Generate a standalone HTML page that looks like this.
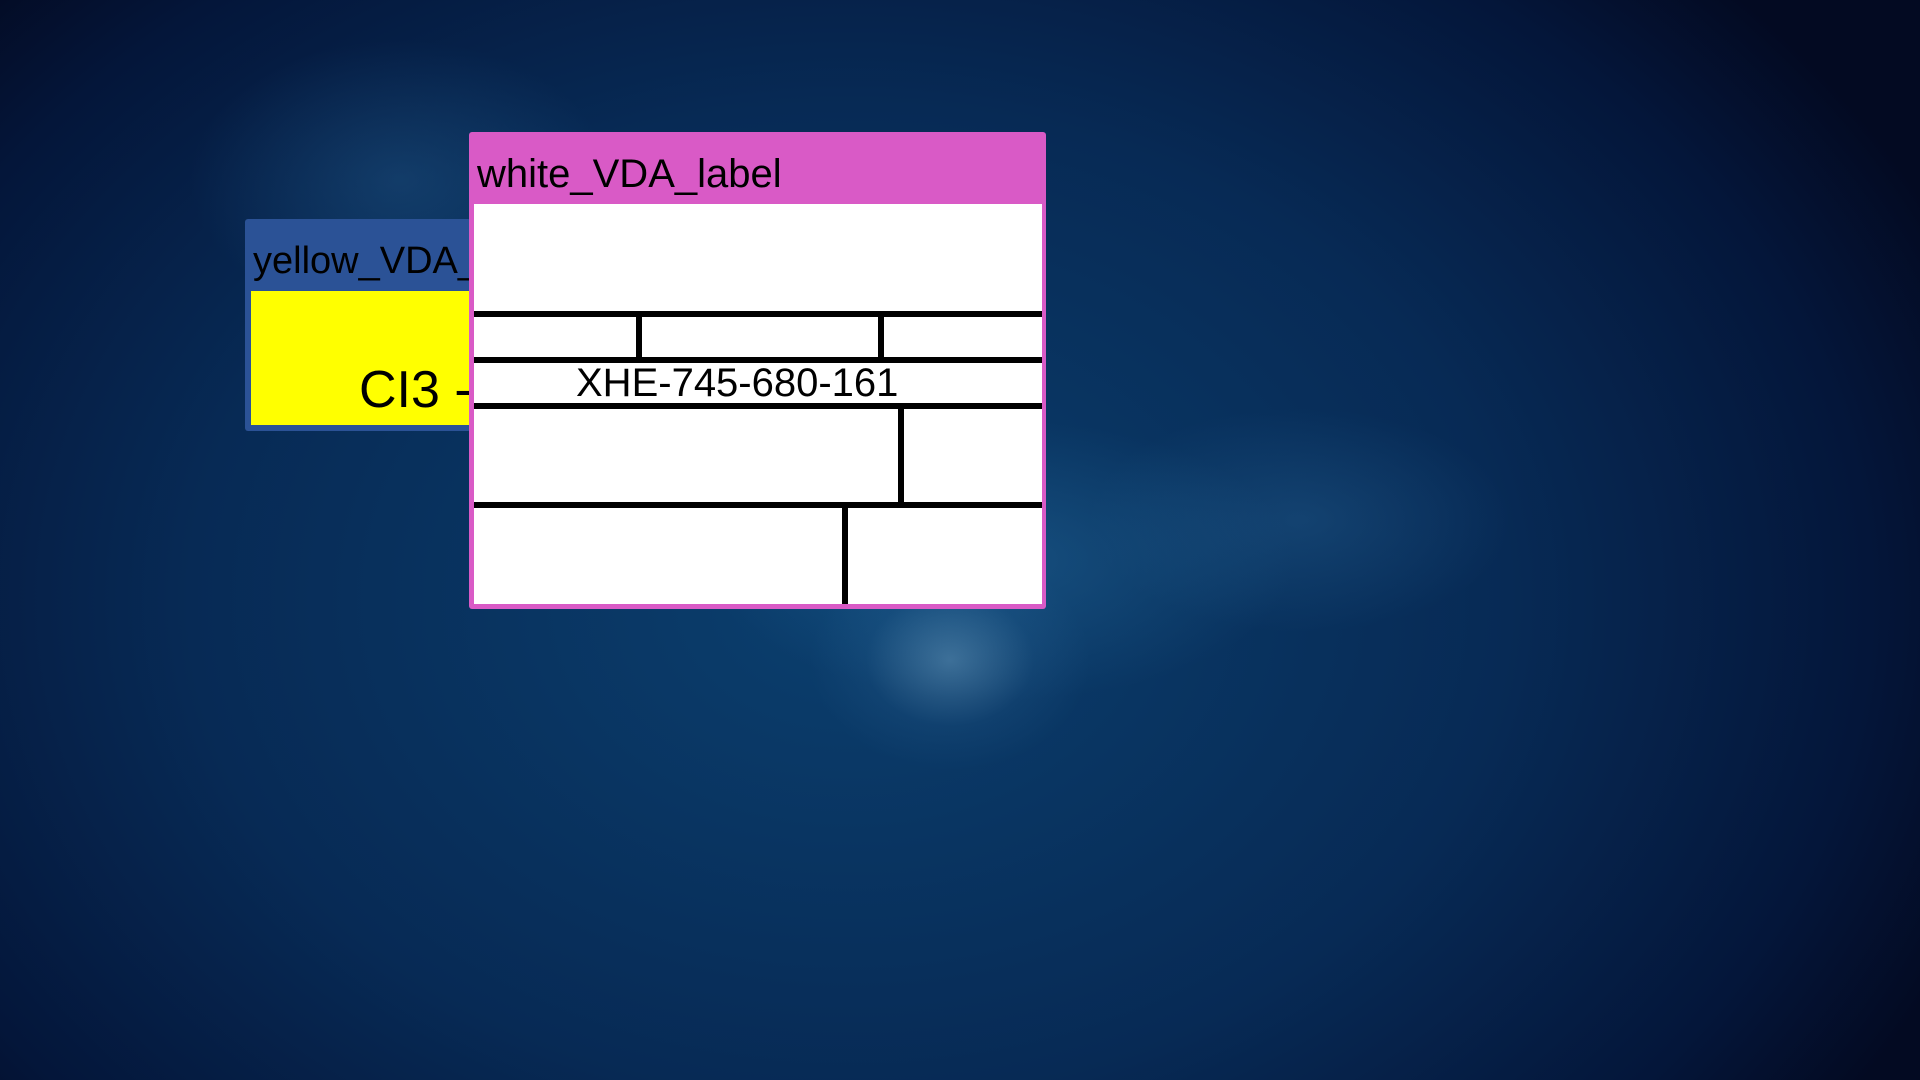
<!DOCTYPE html>
<html><head><meta charset="utf-8"><style>
html,body{margin:0;padding:0}
body{width:1920px;height:1080px;overflow:hidden;position:relative;font-family:"Liberation Sans",Arial,sans-serif;
background:
radial-gradient(ellipse 140px 110px at 950px 660px, rgba(150,200,230,0.35), rgba(60,120,170,0.12) 60%, transparent),
radial-gradient(ellipse 420px 200px at 1000px 560px, rgba(40,110,160,0.4), transparent 70%),
radial-gradient(ellipse 300px 160px at 1300px 520px, rgba(40,100,150,0.35), transparent 70%),
radial-gradient(ellipse 300px 200px at 400px 180px, rgba(40,100,150,0.35), transparent 70%),
radial-gradient(ellipse 1200px 900px at 850px 600px, #0b3f6e, #072a55 55%, #04163a 85%, #030a22);}
.abs{position:absolute}
</style></head><body>
<div class="abs" style="left:245px;top:219px;width:226px;height:212px;background:#2b5296;border-radius:3px"></div>
<div class="abs" style="left:253px;top:240px;font-size:38px;color:#000;white-space:nowrap">yellow_VDA_</div>
<div class="abs" style="left:251px;top:291px;width:220px;height:134px;background:#ffff00"></div>
<div class="abs" style="left:359px;top:360px;font-size:52px;color:#000;white-space:nowrap">CI3 -</div>

<div class="abs" style="left:469px;top:132px;width:577px;height:477px;background:#d95ac6;border-radius:3px"></div>
<div class="abs" style="left:477px;top:152px;font-size:40px;color:#000;white-space:nowrap">white_VDA_label</div>
<div class="abs" style="left:474px;top:204px;width:568px;height:400px;background:#fff;overflow:hidden">
 <div class="abs" style="left:0;top:107px;width:568px;height:6px;background:#000"></div>
 <div class="abs" style="left:0;top:153px;width:568px;height:6px;background:#000"></div>
 <div class="abs" style="left:0;top:199px;width:568px;height:6px;background:#000"></div>
 <div class="abs" style="left:0;top:298px;width:568px;height:6px;background:#000"></div>
 <div class="abs" style="left:162px;top:110px;width:6px;height:46px;background:#000"></div>
 <div class="abs" style="left:404px;top:110px;width:6px;height:46px;background:#000"></div>
 <div class="abs" style="left:424px;top:202px;width:6px;height:99px;background:#000"></div>
 <div class="abs" style="left:368px;top:301px;width:6px;height:99px;background:#000"></div>
 <div class="abs" style="left:102px;top:157px;font-size:40px;color:#000;white-space:nowrap">XHE-745-680-161</div>
</div>
</body></html>
